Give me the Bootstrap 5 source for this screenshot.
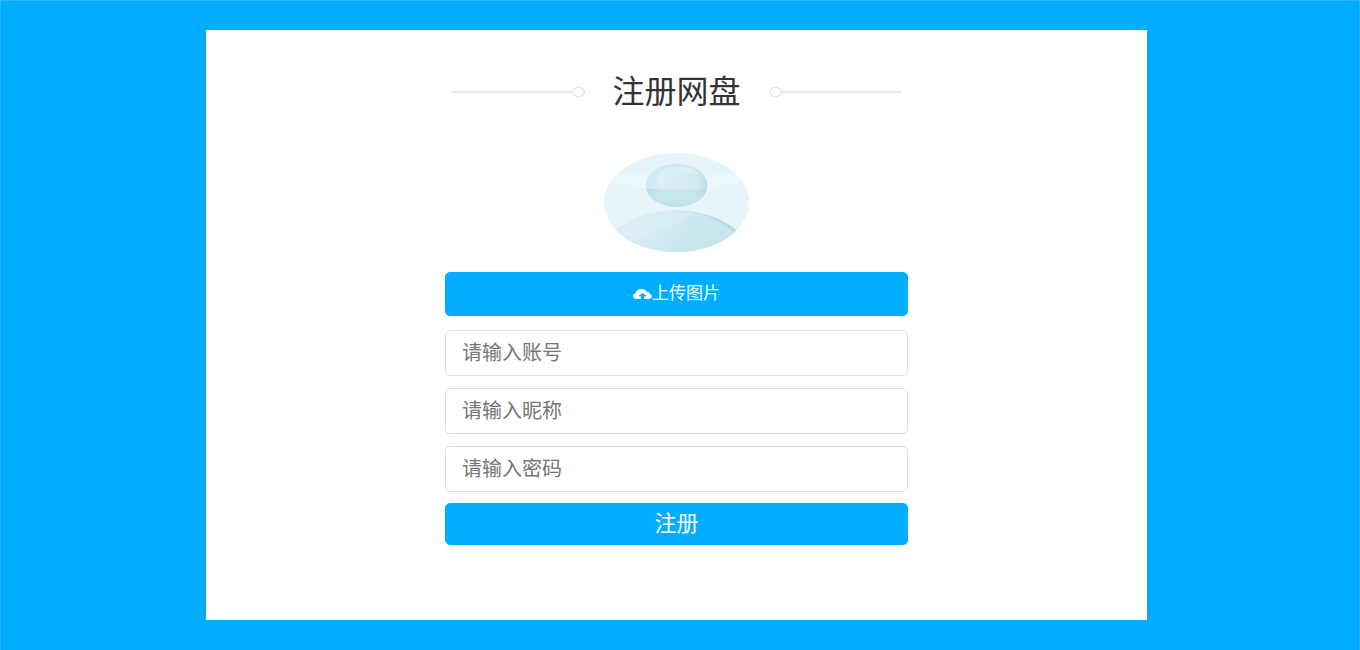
<!DOCTYPE html>
<html lang="zh-CN">
<head>
<meta charset="utf-8">
<meta name="viewport" content="width=device-width, initial-scale=1">
<title>注册网盘</title>
<link rel="stylesheet" href="https://cdn.jsdelivr.net/npm/bootstrap@5.3.0/dist/css/bootstrap.min.css">
<style>
  body {
    background: #00adff;
    font-family: "Liberation Sans", "Noto Sans CJK SC", sans-serif;
    min-height: 100vh;
    box-shadow: inset 1px 1px #28b8ff, inset -1px 0 #28b8ff;
  }
  .page-shell { padding: 30px 213px 30px 206px; }
  .panel { background: #fff; padding: 42px 16px 75px; }
  .signup { max-width: 463px; }
  .heading { padding: 0 7px; margin-bottom: 41px; }
  .heading h1 { font-size: 32px; line-height: 40px; color: #333; margin: 0 28px; }
  .rule { height: 2px; background: #e6e8e9; }
  .ring { width: 13px; height: 10px; border: 1px solid #d5dee2; border-radius: 50%; }
  .avatar { width: 145px; height: 99px; margin-bottom: 20px; }
  .btn-sky {
    --bs-btn-bg: #00adff; --bs-btn-color: #fff; --bs-btn-border-color: #00adff;
    --bs-btn-hover-bg: #009be6; --bs-btn-hover-color: #fff; --bs-btn-hover-border-color: #009be6;
    --bs-btn-active-bg: #008fd4; --bs-btn-active-color: #fff;
    --bs-btn-border-radius: 5px;
    padding: 0;
  }
  .btn-upload { height: 44px; font-size: 17px; margin-bottom: 14px; }
  .btn-submit { height: 42px; font-size: 22px; line-height: 40px; }
  .field { height: 46px; font-size: 20px; padding: 0 16px; border-color: #dde1e3; border-radius: 5px; margin-bottom: 12px; }
  .field:last-of-type { margin-bottom: 11px; }
  .field::placeholder { color: #757575; }
  @media (max-width: 991px) { .page-shell { padding: 30px 16px; } }
  @media (max-width: 480px) { .heading h1 { margin: 0 12px; } }
</style>
</head>
<body>
<main class="page-shell">
  <section class="panel">
    <form class="signup mx-auto d-flex flex-column">
      <div class="heading d-flex align-items-center">
        <span class="rule flex-fill"></span><span class="ring"></span>
        <h1 class="fw-normal text-nowrap">注册网盘</h1>
        <span class="ring"></span><span class="rule flex-fill"></span>
      </div>

      <svg class="avatar align-self-center" viewBox="0 0 145 99" role="img" aria-label="头像">
        <defs>
          <clipPath id="disc"><ellipse cx="72.5" cy="49.5" rx="72.5" ry="49.5"/></clipPath>
          <clipPath id="face"><ellipse cx="72.5" cy="32.2" rx="31" ry="21.5"/></clipPath>
          <radialGradient id="headFill" cx=".42" cy=".45" r=".6">
            <stop offset="0" stop-color="#d9edf4"/><stop offset=".7" stop-color="#d2e9f1"/><stop offset="1" stop-color="#b9dee8"/>
          </radialGradient>
          <radialGradient id="chinFill" cx=".5" cy=".4" r=".6">
            <stop offset=".5" stop-color="#c8e5ee"/><stop offset="1" stop-color="#b5dce7"/>
          </radialGradient>
          <linearGradient id="bodyFill" x1=".1" y1=".1" x2=".8" y2=".5">
            <stop offset="0" stop-color="#dff1f7"/><stop offset=".5" stop-color="#d0e9f0"/><stop offset=".62" stop-color="#c9e6ee"/><stop offset="1" stop-color="#c6e4ed"/>
          </linearGradient>
          <linearGradient id="bodyEdge" x1="0" x2="1">
            <stop offset=".3" stop-color="#d0e9f0"/><stop offset=".8" stop-color="#b6dde7"/>
          </linearGradient>
        </defs>
        <g clip-path="url(#disc)">
          <rect width="145" height="99" fill="#e7f4f9"/>
          <path d="M0 21.7H145V26Q110 37 72.5 37T0 26Z" fill="#ecf8fa"/>
          <ellipse cx="72.500" cy="110" rx="77" ry="52.5" fill="url(#bodyEdge)"/>
          <ellipse cx="69.500" cy="111" rx="75" ry="53" fill="url(#bodyFill)"/>
          <path d="M18 76Q43 59 86 60Q83 70 53 77Q39 82 33 88Z" fill="#e2f3f8" opacity=".35"/>
        </g>
        <g clip-path="url(#face)">
          <rect x="41" y="10" width="63" height="45" fill="url(#headFill)"/>
          <path d="M41 35.5Q72.5 38.5 104 35.5V55H41Z" fill="url(#chinFill)"/>
          <path d="M54 33C49 23 59 13 75 13Q93 13 97 24Q91 18 79 20Q68 22 63 30Q59 35 54 33Z" fill="#e3f3f8" opacity=".45"/>
        </g>
      </svg>

      <button type="button" class="btn btn-sky btn-upload w-100 d-flex align-items-center justify-content-center">
        <svg width="19" height="10" viewBox="0 0 19 10" aria-hidden="true">
          <path fill="#fff" d="M4 10C1.600 10 0 8.800 0 7.200C0 5.800 1 4.800 2.600 4.400C2.700 1.900 5.200 0 8.400 0C11 0 13 1.200 13.800 2.900C15.300 2.500 16.700 3.300 16.500 4.700C18 5.100 19 6 19 7.300C19 8.800 17.300 10 15.200 10H11.200V7.300H14L9.500 3.900L5 7.300H7.800V10Z"/>
        </svg><span>上传图片</span>
      </button>
      <input class="form-control field" type="text" placeholder="请输入账号" aria-label="请输入账号">
      <input class="form-control field" type="text" placeholder="请输入昵称" aria-label="请输入昵称">
      <input class="form-control field" type="password" placeholder="请输入密码" aria-label="请输入密码">
      <button type="submit" class="btn btn-sky btn-submit w-100">注册</button>
    </form>
  </section>
</main>
<script src="https://cdn.jsdelivr.net/npm/bootstrap@5.3.0/dist/js/bootstrap.bundle.min.js"></script>
</body>
</html>
